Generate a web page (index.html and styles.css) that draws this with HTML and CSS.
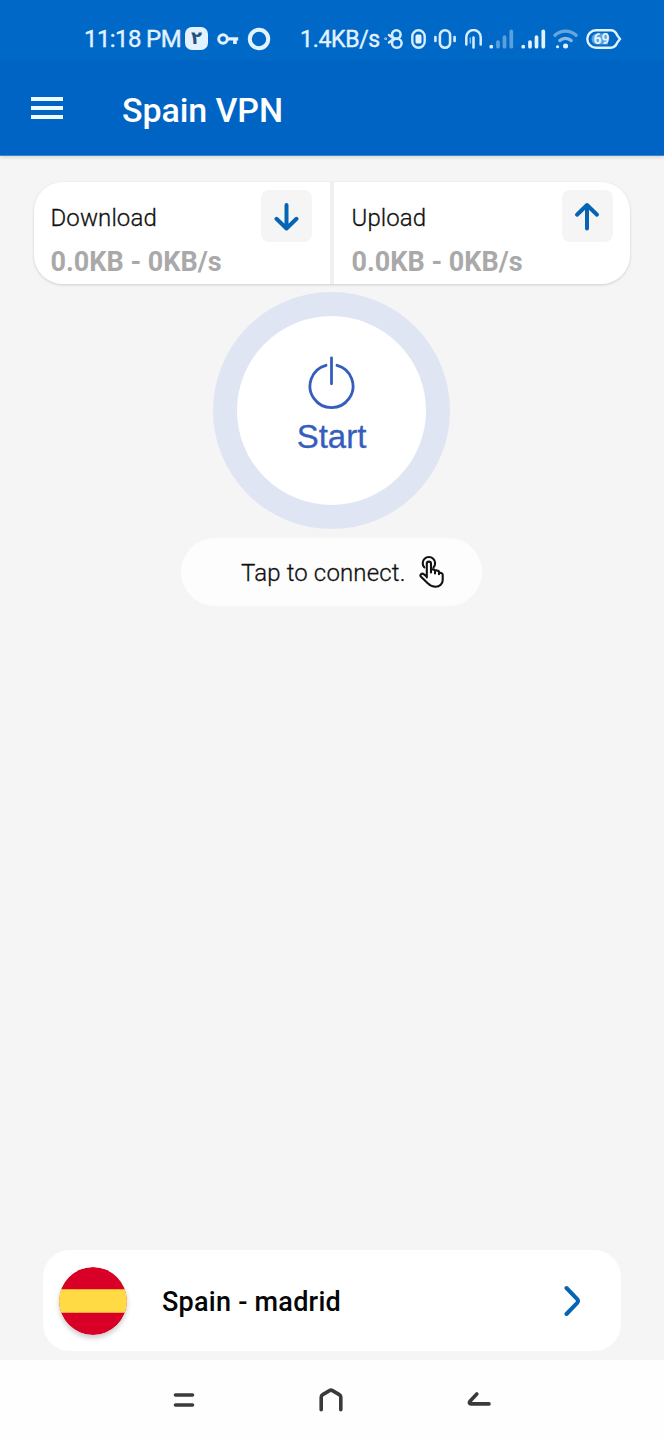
FILE: index.html
```html
<!DOCTYPE html>
<html lang="en">
<head>
  <meta charset="UTF-8">
  <meta name="viewport" content="width=device-width, initial-scale=1.0">
  <title>Spain VPN</title>
  <link rel="stylesheet" href="styles.css">
</head>
<body>

  <!-- Status bar -->
  <div class="status-bar">
    <span class="status-time">11:18 PM</span>
    <span class="status-badge">٢</span>
    <svg class="icon-key" width="22" height="14" viewBox="0 0 22 14">
      <circle cx="6" cy="7" r="4.3" fill="none" stroke="#e2f2ff" stroke-width="3"/>
      <path d="M10 5.2h11.2v3.3h-1.4v3.4h-3.7V8.5H10z" fill="#e2f2ff"/>
    </svg>
    <svg class="icon-ring" width="24" height="24" viewBox="0 0 24 24">
      <circle cx="12" cy="12" r="9.2" fill="none" stroke="#e2f2ff" stroke-width="4"/>
    </svg>
    <span class="status-speed">1.4KB/s</span>
    <svg class="icon-bt" width="19" height="20" viewBox="0 0 19 20" fill="none" stroke="#d6ecff" stroke-width="2.5" stroke-linecap="round">
      <rect x="8" y="1.300" width="8.600" height="8.400" rx="4.200"/>
      <rect x="8" y="9.700" width="9.600" height="9" rx="4.500"/>
      <path d="M5 6l5 3.700L5 13.500"/>
      <circle cx="1.600" cy="9.700" r=".4" stroke-width="1.800"/>
    </svg>
    <svg class="icon-pill" width="15" height="20" viewBox="0 0 15 20">
      <rect x="1.300" y="1.300" width="12.400" height="17.400" rx="6.200" fill="none" stroke="#d6ecff" stroke-width="2.400"/>
      <rect x="4.500" y="5.500" width="6" height="9" rx="1.500" fill="#e2f2ff"/>
    </svg>
    <svg class="icon-vibrate" width="22" height="20" viewBox="0 0 22 20" fill="none" stroke="#d6ecff" stroke-width="2.600" stroke-linecap="round">
      <rect x="5.900" y="1.300" width="10.200" height="17.400" rx="5.100"/>
      <path d="M1.400 8v4M20.600 8v4"/>
    </svg>
    <svg class="icon-hotspot" width="17" height="20" viewBox="0 0 17 20" fill="none" stroke="#d6ecff" stroke-width="2.500" stroke-linecap="round">
      <path d="M1.300 15.500V8.300a7.200 7.200 0 0 1 14.400 0v7.200M8.500 8.500v10"/>
      <path d="M5.300 9v5" stroke-width="1.500" opacity=".6"/>
    </svg>
    <svg class="icon-signal" width="25" height="20" viewBox="0 0 25 20" stroke="#e2f2ff" stroke-width="3.700" stroke-linecap="round">
      <path d="M2.200 17.700h.1"/>
      <path d="M9 13v4.700M15.500 8v9.700M22.300 2.300v15.400" opacity=".4"/>
    </svg>
    <svg class="icon-signal icon-signal-full" width="25" height="20" viewBox="0 0 25 20" stroke="#e2f2ff" stroke-width="3.700" stroke-linecap="round">
      <path d="M2.200 17.700h.1M9 13v4.700M15.500 8v9.700M22.300 2.300v15.400"/>
    </svg>
    <svg class="icon-wifi" width="25" height="20" viewBox="0 0 25 20" fill="none" stroke="#e2f2ff" stroke-width="3.300" stroke-linecap="round">
      <path d="M2 6.300a15.500 15.500 0 0 1 21 0" opacity=".45"/>
      <path d="M6.800 11.500a8.500 8.500 0 0 1 11.400 0" opacity=".6"/>
      <path d="M4.500 17.800h.1" stroke-width="3"/>
      <path d="M12.500 17h.1" stroke-width="5"/>
    </svg>
    <div class="battery">
      <svg width="36" height="20" viewBox="0 0 36 20">
        <path d="M10 1.300h14.500c4 0 5.500 2 6.800 5.200l2.700 3.500-2.700 3.500c-1.300 3.200-2.800 5.200-6.800 5.200H10a8.700 8.700 0 0 1 0-17.400z" fill="none" stroke="#e2f2ff" stroke-width="2.400"/>
        <path d="M11 4.500h11v11H11a5.500 5.500 0 0 1 0-11z" fill="#5aa2e2"/>
      </svg>
      <span>69</span>
    </div>
  </div>

  <!-- App bar -->
  <header class="app-bar">
    <div class="menu-icon">
      <span></span>
      <span></span>
      <span></span>
    </div>
    <h1>Spain VPN</h1>
  </header>

  <main class="content">
    <div class="stats-card">
      <div class="stat">
        <div class="stat-top">
          <span class="stat-label">Download</span>
          <span class="stat-icon">
            <svg width="28" height="30" viewBox="0 0 28 30">
              <path d="M14.500 4v23.500M4.500 17.800l10 9.700 10-9.700"/>
            </svg>
          </span>
        </div>
        <div class="stat-value">0.0KB - 0KB/s</div>
      </div>
      <div class="stat">
        <div class="stat-top">
          <span class="stat-label">Upload</span>
          <span class="stat-icon">
            <svg width="28" height="30" viewBox="0 0 28 30">
              <path d="M14 27.500V4M4 13.700L14 4l10 9.700"/>
            </svg>
          </span>
        </div>
        <div class="stat-value">0.0KB - 0KB/s</div>
      </div>
    </div>

    <button class="start-btn">
      <svg width="48" height="54" viewBox="0 0 48 54">
        <path d="M18 9.300a21.500 21.500 0 1 0 11 0M23.500 1.800v26"/>
      </svg>
      <span>Start</span>
    </button>

    <div class="status-pill">
      <span>Tap to connect.</span>
      <svg width="26" height="34" viewBox="0 0 26 34">
        <path d="M5.300 12.400a6.200 6.200 0 1 1 9.200 0"/>
        <path d="M7.800 22.500V8.700a2.100 2.100 0 0 1 4.200 0v8.800M12 17.500v-2.300c0-1.200 4-1.200 4 .6v2.700M16 18v-1.700c0-1.300 4-1.200 4 .6v2.300M20 18.500c.8-1.200 3.700-.6 3.700 1.200v5.600c0 3.500-3 6.500-7 6.500-4.200 0-5.700-1.200-7.700-3.400L2 21.800c-1.500-1.700.7-4 2.600-2.600l3.200 2.400"/>
      </svg>
    </div>

    <div class="server-card">
      <svg class="flag" width="68" height="68" viewBox="0 0 68 68">
        <circle cx="34" cy="34" r="34" fill="#d80027"/>
        <path d="M2.100 22.200h63.800a34 34 0 0 1 0 23.600H2.100a34 34 0 0 1 0-23.600z" fill="#ffda44"/>
      </svg>
      <span class="server-name">Spain - madrid</span>
      <svg class="chevron" width="18" height="32" viewBox="0 0 18 32">
        <path d="M3.500 3l10.700 11.200q1.600 1.800 0 3.600L3.500 29"/>
      </svg>
    </div>
  </main>

  <!-- System navigation -->
  <nav class="nav-bar">
    <svg width="24" height="26" viewBox="0 0 24 26">
      <path d="M3.500 8h17M3.500 18h17"/>
    </svg>
    <svg width="26" height="26" viewBox="0 0 26 26">
      <path d="M3.200 22.800V10.200q0-1.700 1.500-2.600l6.800-4q1.500-.9 3 0l6.800 4q1.500.9 1.500 2.600v12.600"/>
    </svg>
    <svg width="26" height="26" viewBox="0 0 26 26">
      <path d="M10.800 7L4 14.200c-1.300 1.500-.6 2.700 1 2.700h18"/>
    </svg>
  </nav>

</body>
</html>
```
FILE: styles.css
```css
* {
  box-sizing: border-box;
}
body {
  font-family: Roboto, sans-serif;
  margin: 0;
  height: 1440px;
  display: flex;
  flex-direction: column;
  background-color: #f5f5f5;
}
svg {
  display: block;
  flex-shrink: 0;
}

/* status bar */
.status-bar {
  height: 62px;
  padding: 15px 0 0 84px;
  background-color: #0069c7;
  color: #e2f2ff;
  display: flex;
  align-items: center;
  flex-shrink: 0;
}
.status-time {
  width: 101px;
  font-size: 24px;
  letter-spacing: -0.6px;
  -webkit-text-stroke: 0.4px #e2f2ff;
  white-space: nowrap;
}
.status-badge {
  width: 23px;
  height: 23px;
  border-radius: 7px;
  background-color: #e2f2ff;
  color: #24527f;
  font-family: "DejaVu Sans", sans-serif;
  font-size: 18px;
  font-weight: bold;
  line-height: 21px;
  text-align: center;
}
.icon-key {
  margin-left: 9px;
}
.icon-ring {
  margin-left: 8px;
}
.status-speed {
  width: 80px;
  margin-left: 29px;
  font-size: 23px;
  letter-spacing: -0.3px;
  -webkit-text-stroke: 0.4px #e2f2ff;
  padding-top: 1px;
  white-space: nowrap;
}
.icon-bt {
  margin-left: 4px;
}
.icon-pill {
  margin-left: 8px;
}
.icon-vibrate {
  margin-left: 8px;
}
.icon-hotspot {
  margin-left: 9px;
}
.icon-signal {
  margin-left: 7px;
}
.icon-wifi {
  margin-left: 7px;
}
.battery {
  position: relative;
  margin-left: 8px;
}
.battery span {
  position: absolute;
  top: 0;
  left: 0;
  width: 31px;
  font-size: 14px;
  font-weight: bold;
  line-height: 20px;
  text-align: center;
}

/* app bar */
.app-bar {
  height: 94px;
  padding: 3px 0 0 31px;
  background-color: #0064c4;
  border-bottom: 1px solid #3f85cd;
  box-shadow: 0 1px 4px rgba(0, 0, 0, 0.15);
  color: white;
  display: flex;
  align-items: center;
  flex-shrink: 0;
}
.menu-icon {
  width: 32px;
  margin-top: -4px;
  display: flex;
  flex-direction: column;
  gap: 5px;
}
.menu-icon span {
  height: 4px;
  background-color: #effaff;
}
.app-bar h1 {
  margin: 0 0 0 59px;
  font-size: 34px;
  font-weight: 500;
  letter-spacing: -0.1px;
  line-height: 40px;
}

.content {
  flex: 1;
  display: flex;
  flex-direction: column;
  align-items: center;
  padding: 26px 0 9px;
}

/* download / upload */
.stats-card {
  width: 596px;
  height: 102px;
  margin-right: 1px;
  border-radius: 29px;
  background-color: #f0f0f0;
  box-shadow: 0 1px 3px rgba(0, 0, 0, 0.16);
  display: flex;
  gap: 4px;
  overflow: hidden;
}
.stat {
  flex: 1;
  padding: 8px 17px 0 18px;
  background-color: white;
}
.stat:first-child {
  padding-left: 17px;
  padding-right: 18px;
}
.stat-top {
  display: flex;
  justify-content: space-between;
  align-items: center;
}
.stat-label {
  font-size: 24px;
  font-weight: 300;
  letter-spacing: 0.1px;
  -webkit-text-stroke: 0.3px #111;
  color: #111;
  padding-top: 3px;
}
.stat-icon {
  width: 51px;
  height: 52px;
  border-radius: 8px;
  background-color: #f5f5f5;
  display: flex;
  justify-content: center;
  align-items: center;
}
.stat-icon path {
  fill: none;
  stroke: #0664b5;
  stroke-width: 4;
  stroke-linecap: round;
  stroke-linejoin: round;
}
.stat-value {
  margin-top: 4px;
  font-size: 27px;
  font-weight: bold;
  line-height: 32px;
  color: #a9a9a9;
}

/* connect button */
.start-btn {
  width: 237px;
  height: 237px;
  margin-top: 8px;
  margin-right: 1px;
  padding: 40px 0 0;
  border: 24px solid #e0e5f3;
  border-radius: 50%;
  background-color: white;
  color: #355dbe;
  display: flex;
  flex-direction: column;
  align-items: center;
  font-family: "Liberation Sans", Arial, sans-serif;
  font-size: 33px;
}
.start-btn span {
  margin-top: 8px;
  line-height: 38px;
  -webkit-text-stroke: 0.3px #355dbe;
}
.start-btn path {
  fill: none;
  stroke: #355dbe;
  stroke-width: 2.8;
  stroke-linecap: round;
}

.status-pill {
  width: 301px;
  height: 68px;
  margin-top: 9px;
  margin-right: 1px;
  padding-left: 60px;
  border-radius: 34px;
  background-color: #fdfdfd;
  display: flex;
  align-items: center;
}
.status-pill span {
  width: 178px;
  padding-top: 1px;
  font-size: 24px;
  letter-spacing: 0.15px;
  font-weight: 300;
  -webkit-text-stroke: 0.3px #111;
  color: #111;
  white-space: nowrap;
}
.status-pill path {
  fill: none;
  stroke: #111;
  stroke-width: 2.1;
  stroke-linecap: round;
  stroke-linejoin: round;
}

/* selected server */
.server-card {
  width: 578px;
  height: 101px;
  margin-top: auto;
  padding: 0 40px 0 16px;
  border-radius: 27px;
  background-color: white;
  display: flex;
  align-items: center;
}
.flag {
  border-radius: 50%;
  box-shadow: 0 3px 5px rgba(0, 0, 0, 0.2);
}
.server-name {
  flex: 1;
  margin-left: 35px;
  padding-top: 3px;
  font-size: 27px;
  font-weight: 500;
  letter-spacing: 0.25px;
  color: #050505;
}
.chevron path {
  fill: none;
  stroke: #0664b5;
  stroke-width: 4;
  stroke-linecap: round;
}

/* bottom navigation */
.nav-bar {
  height: 80px;
  padding-bottom: 1px;
  background-color: #fefefe;
  display: flex;
  justify-content: center;
  align-items: center;
  gap: 122px;
  flex-shrink: 0;
}
.nav-bar path {
  fill: none;
  stroke: #3a3a3a;
  stroke-width: 3.6;
  stroke-linecap: round;
  stroke-linejoin: round;
}
```
